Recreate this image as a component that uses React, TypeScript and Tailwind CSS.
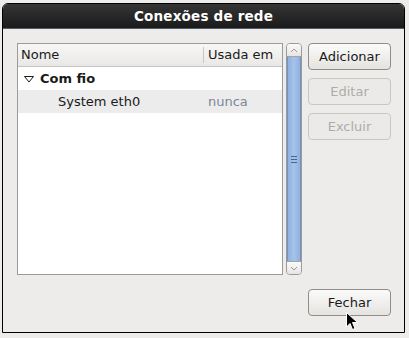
import React from 'react';

/* Conexões de rede — GNOME 2 style dialog */

const font = { fontFamily: '"DejaVu Sans", "Liberation Sans", sans-serif' };

function Button({ label, disabled }: { label: string; disabled?: boolean }) {
  return (
    <div
      className={`h-[27px] w-[83px] rounded-[4px] border flex items-center justify-center text-[13px] ${
        disabled
          ? 'border-[#c9c7c3] bg-[#ebeae8] text-[#aeaca8]'
          : 'border-[#8f8d89] bg-gradient-to-b from-[#fbfbfa] to-[#e4e3e0] text-[#1a1a1a]'
      }`}
    >
      {label}
    </div>
  );
}

export default function App() {
  return (
    <div className="w-[409px] h-[338px] bg-[#edeceb] pt-[3px] pl-[2px]" style={font}>
      <div className="w-[403px] h-[330px] border border-black rounded-t-[6px] bg-[#edeceb] flex flex-col overflow-hidden">
        {/* ═══ Title bar ═══ */}
        <div className="h-[25px] shrink-0 bg-gradient-to-b from-[#353535] to-[#1b1b1b] border-b border-[#4e5d6c] flex items-center justify-center">
          <span className="text-white font-bold text-[13.5px] tracking-[0.2px]">Conexões de rede</span>
        </div>

        {/* ═══ Body ═══ */}
        <div className="flex pl-[14px] pt-[14px]">
          {/* list */}
          <div className="w-[266px] h-[232px] border border-[#9d9b97] bg-white flex flex-col">
            <div className="h-[23px] flex bg-gradient-to-b from-[#f7f7f6] to-[#e9e8e6] border-b border-[#c6c4c0] text-[13px] text-[#1a1a1a]">
              <div className="w-[186px] pl-[3px] flex items-center border-r border-[#c9c7c3] my-[3px]">Nome</div>
              <div className="flex-1 pl-[4px] flex items-center">Usada em</div>
            </div>
            <div className="h-[23px] flex items-center text-[13px] font-bold text-[#1a1a1a]">
              <svg width="12" height="12" viewBox="0 0 12 12" className="ml-[5px] mr-[5px]">
                <path d="M1.5 3.5 L10.5 3.5 L6 9 Z" fill="none" stroke="#1a1a1a" strokeWidth="1" />
              </svg>
              <span>Com fio</span>
            </div>
            <div className="h-[23px] flex items-center bg-[#ececec] text-[13px]">
              <div className="w-[190px] pl-[40px] text-[#1a1a1a]">System eth0</div>
              <div className="text-[#7b8898]">nunca</div>
            </div>
          </div>

          {/* scrollbar */}
          <div className="ml-[3px] w-[16px] h-[232px] flex flex-col border border-[#9d9b97] rounded-[4px] bg-[#e6e5e2] overflow-hidden">
            <div className="h-[13px] flex items-center justify-center bg-gradient-to-b from-[#fafaf9] to-[#e6e5e2] border-b border-[#a6a4a0]">
              <svg width="8" height="5" viewBox="0 0 8 5">
                <path d="M1 4 L4 1 L7 4" fill="none" stroke="#9a9894" strokeWidth="1" />
              </svg>
            </div>
            <div className="flex-1 bg-gradient-to-r from-[#8eb1df] via-[#a6c3ea] to-[#8eb1df] border-x border-[#6f93c4] flex flex-col items-center justify-center gap-[2px]">
              <div className="w-[6px] h-px bg-[#47658f]" />
              <div className="w-[6px] h-px bg-[#47658f]" />
              <div className="w-[6px] h-px bg-[#47658f]" />
            </div>
            <div className="h-[13px] flex items-center justify-center bg-gradient-to-b from-[#fafaf9] to-[#e6e5e2] border-t border-[#a6a4a0]">
              <svg width="8" height="5" viewBox="0 0 8 5">
                <path d="M1 1 L4 4 L7 1" fill="none" stroke="#9a9894" strokeWidth="1" />
              </svg>
            </div>
          </div>

          {/* buttons */}
          <div className="ml-[6px] flex flex-col gap-[8px]">
            <Button label="Adicionar" />
            <Button label="Editar" disabled />
            <Button label="Excluir" disabled />
          </div>
        </div>

        {/* ═══ Footer ═══ */}
        <div className="flex justify-end pr-[13px] pt-[14px]">
          <div className="relative">
            <Button label="Fechar" />
            <svg width="13" height="20" viewBox="0 0 13 20" className="absolute left-[38px] top-[23px]">
              <path d="M0.5 0.5 L0.5 15 L4 11.5 L6.5 17.5 L9 16.5 L6.5 10.5 L11.5 10.5 Z" fill="#000" stroke="#fff" strokeWidth="1" />
            </svg>
          </div>
        </div>
      </div>
    </div>
  );
}
